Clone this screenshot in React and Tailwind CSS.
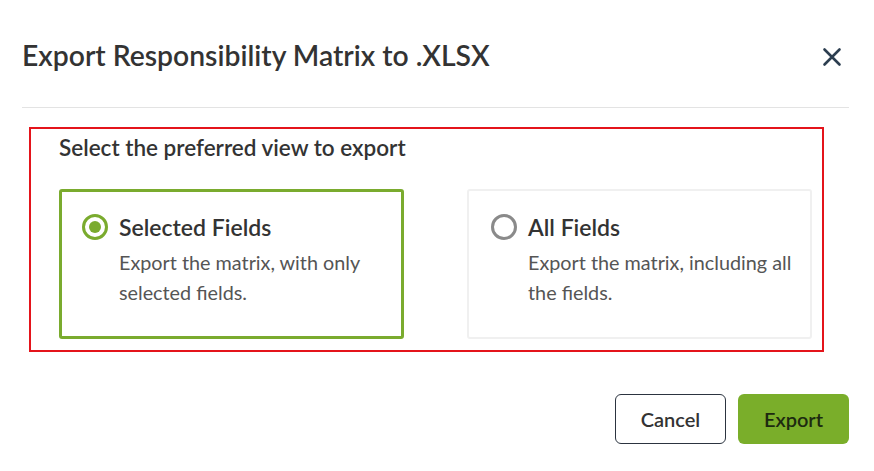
import React, { useState } from "react";

const options = [
  {
    id: "selected",
    title: "Selected Fields",
    desc: "Export the matrix, with only selected fields.",
  },
  {
    id: "all",
    title: "All Fields",
    desc: "Export the matrix, including all the fields.",
  },
];

const Radio = ({ checked }) => (
  <span
    className={`flex items-center justify-center w-[26px] h-[26px] rounded-full shrink-0 border-[3px] ${
      checked ? "border-[#7aab2e]" : "border-[#8a8a8a]"
    }`}
  >
    {checked && <span className="w-[12px] h-[12px] rounded-full bg-[#7aab2e]" />}
  </span>
);

const App = () => {
  const [view, setView] = useState("selected");

  return (
    <div
      className="w-[874px] h-[471px] bg-white text-[#333]"
      style={{ fontFamily: "Lato, 'Noto Sans', sans-serif" }}
    >
      {/* Header */}
      <div className="flex items-center justify-between pl-[22px] pr-[32px] pt-[36px] pb-[33px]">
        <h1 className="text-[28.3px] font-semibold leading-[38px] text-[#333]">
          Export Responsibility Matrix to .XLSX
        </h1>
        <button className="text-[#2c3e50] mt-[4px]">
          <svg width="20" height="20" viewBox="0 0 20 20" fill="none">
            <path d="M2.5 2.5L17.5 17.5M17.5 2.5L2.5 17.5" stroke="currentColor" strokeWidth="2.6" strokeLinecap="round" />
          </svg>
        </button>
      </div>
      <div className="ml-[22px] mr-[25px] h-px bg-[#e3e3e3]" />

      {/* Options */}
      <div className="ml-[29px] mt-[19px] w-[795px] border-2 border-[#e4141b] pl-[28px] pt-[4px] pb-[11px]">
        <p className="text-[22.5px] font-semibold leading-[30px]">
          Select the preferred view to export
        </p>
        <div className="flex gap-[63px] mt-[26px]">
          {options.map((o) => {
            const checked = view === o.id;
            return (
              <div
                key={o.id}
                onClick={() => setView(o.id)}
                className={`w-[345px] h-[150px] rounded-[3px] cursor-pointer pt-[20px] ${
                  checked
                    ? "border-[3px] border-[#7aab2e] pl-[20px]"
                    : "border-2 border-[#f0f0f0] pl-[22px] pt-[21px]"
                }`}
              >
                <div className="flex items-center gap-[11px]">
                  <Radio checked={checked} />
                  <span className="text-[23px] font-semibold leading-[30px] text-[#333]">
                    {o.title}
                  </span>
                </div>
                <p className="ml-[37px] mt-[5px] text-[19.8px] leading-[30px] text-[#555] w-[285px]">
                  {o.desc}
                </p>
              </div>
            );
          })}
        </div>
      </div>

      {/* Footer */}
      <div className="flex justify-end gap-[12px] pr-[25px] mt-[42px]">
        <button className="w-[111px] h-[50px] rounded-[6px] border border-[#2c3440] text-[20px] font-semibold text-[#333]">
          Cancel
        </button>
        <button className="w-[111px] h-[50px] rounded-[6px] bg-[#7aae2a] text-[20px] font-semibold text-[#1d2a10]">
          Export
        </button>
      </div>
    </div>
  );
};

export default App;
